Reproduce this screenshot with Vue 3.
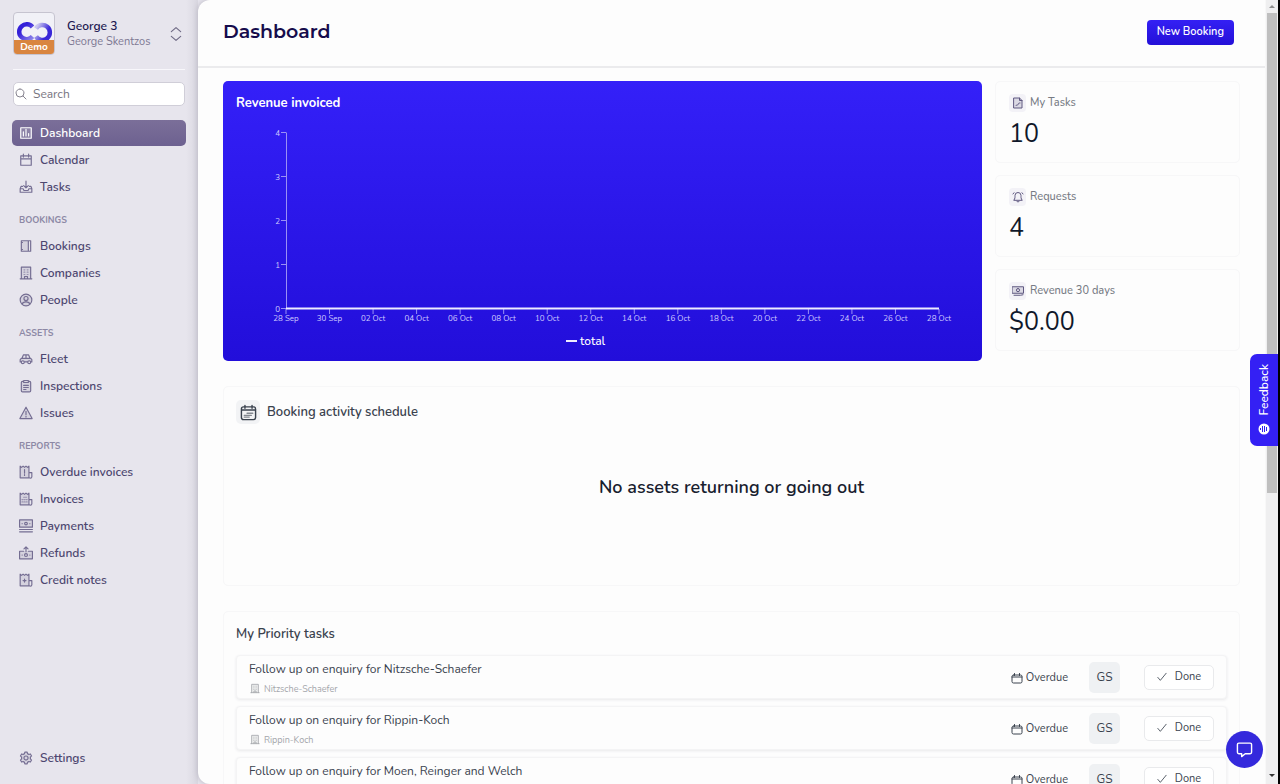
<script setup>
import { h, ref } from 'vue'

const shapes = {
  dashboard: { tint: 'M3 3h18v18H3z', line: 'M3 4v17h18V3H3M7.5 10v7M12 5.500v11.500M16.500 13v4', soft: '' },
  calendar: { line: 'M3 5h18v16H3zM3 10h18M7.500 2v5M16.500 2v5' },
  inbox: { line: 'M12 2v11M8 9.500l4 4 4-4M6 11H3.500L2 15v6h20v-6l-1.500-4H18M2 15h5l1.500 3h7l1.500-3h5' },
  book: { tint: 'M4 3h13v18H4z', line: 'M4 3h16v18H4zM16 3v18M4 6h2M4 18h2' },
  building: { tint: 'M4 2h16v20H4z', line: 'M2 22h20M4 22V2h16v20M9.500 22v-4h5v4', soft: 'M8.500 6.500h1.500M14 6.500h1.500M8.500 10.500h1.500M14 10.500h1.500M8.500 14.500h1.500M14 14.500h1.500' },
  person: { tint: 'M12 2a10 10 0 1 0 0 20a10 10 0 0 0 0-20', line: 'M12 2a10 10 0 1 0 0 20a10 10 0 0 0 0-20M12 6a3.500 3.500 0 1 0 0 7a3.500 3.500 0 0 0 0-7M5.500 19c1-5 12-5 13 0' },
  car: { tint: 'M2 11h20v6H2z', line: 'M5 11l2.500-6h9L19 11M12 5v6M4 11h16l2 2v4h-2M15 17H9M4 17H2v-4l2-2M6.500 15a2.500 2.500 0 1 0 0 5a2.500 2.500 0 0 0 0-5M17.500 15a2.500 2.500 0 1 0 0 5a2.500 2.500 0 0 0 0-5' },
  clipboard: { tint: 'M4 4h16v18H4z', line: 'M8 4H6a2 2 0 0 0-2 2v14a2 2 0 0 0 2 2h12a2 2 0 0 0 2-2V6a2 2 0 0 0-2-2h-2M8 2.500h8V6H8zM8 11h8M8 14.500h8M8 18h4' },
  warning: { tint: 'M12 2L2 21h20z', line: 'M12 2L1.500 21.500h21zM12 9v6M12 17.500v1.500' },
  billAlert: { tint: 'M2 3h14v18H2z', line: 'M2 22V2l2.500 2L7 2l2.500 2L12 2l2.500 2L17 2v20zM17 13h5v7a2 2 0 0 1-5 0M9.500 8v6M9.500 16.500v1.500' },
  bill: { tint: 'M2 3h14v18H2z', line: 'M2 22V2l2.500 2L7 2l2.500 2L12 2l2.500 2L17 2v20zM17 13h5v7a2 2 0 0 1-5 0', soft: 'M8 9h5M5 13h2M9 13h1.500M12.500 13H14M5 17h2M9 17h1.500M12.500 17H14' },
  billPlus: { tint: 'M2 3h14v18H2z', line: 'M2 22V2l2.500 2L7 2l2.500 2L12 2l2.500 2L17 2v20zM17 13h5v7a2 2 0 0 1-5 0M9.500 10.500v5M7 13h5' },
  cash: { tint: 'M1 2h22v12H1z', line: 'M1 1.500h22v12.500H1zM1 18h22M1 22h22M12 5.500a2.300 2.300 0 1 0 0 4.600a2.300 2.300 0 0 0 0-4.600', soft: 'M5 8h1M18 8h1' },
  refund: { tint: 'M1 9h22v13H1z', line: 'M8 9H1v13h22V9h-7M12 10V2M8.500 5L12 1.500L15.500 5M12 13a2.500 2.500 0 1 0 0 5a2.500 2.500 0 0 0 0-5', soft: 'M5 15.500h1M18 15.500h1' },
  gear: { tint: 'M12 4a8 8 0 1 0 0 16a8 8 0 0 0 0-16', line: 'M9.500 4.500L10 2h4l.5 2.500 2.500 1.500 2.500-1 2 3.500-2 2v3l2 2-2 3.500-2.500-1-2.500 1.500L14 22h-4l-.5-2.500L7 18l-2.500 1-2-3.500 2-2v-3l-2-2 2-3.500 2.500 1zM12 8.500a3.500 3.500 0 1 0 0 7a3.500 3.500 0 0 0 0-7' },
  search: { line: 'M10 2a8 8 0 1 0 0 16a8 8 0 0 0 0-16M16 16l6 6' },
  updown: { line: 'M4 8l8-7 8 7M4 16l8 7 8-7' },
  doc: { tint: 'M4 2h11l5 5v15H4z', line: 'M4 2h11l5 5v15H4zM15 2v5h5M8 17c1-3 3 1 4-2s2-3 4-3' },
  bell: { line: 'M4 18c2.500-3 2-6 2-9a6 6 0 0 1 12 0c0 3-.5 6 2 9zM9.500 20.500c1 2 4 2 5 0M2 6l2-2.500M22 6l-2-2.500' },
  note: { tint: 'M1 4h22v13H1z', line: 'M1 3.500h22v13H1zM4 20.500h13l5-1M12 7a3.200 3.200 0 1 0 0 6.400A3.200 3.200 0 0 0 12 7' },
  schedule: { line: 'M5 4h14a3 3 0 0 1 3 3v12a3 3 0 0 1-3 3H5a3 3 0 0 1-3-3V7a3 3 0 0 1 3-3M2 8.500h20M7 2v4M17 2v4', soft: 'M10 13h8M6 16h10M6 18.500h7' },
  due: { line: 'M5 6h14a3 3 0 0 1 3 3v10a3 3 0 0 1-3 3H5a3 3 0 0 1-3-3V9a3 3 0 0 1 3-3M2 10h20M7 3v4M17 3v4' },
  check: { line: 'M2 13l6 7L22 3' },
  chat: { line: 'M4 3h16a2 2 0 0 1 2 2v11a2 2 0 0 1-2 2h-7l-5 4v-4H4a2 2 0 0 1-2-2V5a2 2 0 0 1 2-2' }
}

const Icon = (props) => {
  const s = shapes[props.name]
  return h('svg', { viewBox: '0 0 24 24', fill: 'none', stroke: 'currentColor', 'stroke-width': 2, 'stroke-linejoin': 'round', 'stroke-linecap': 'round', 'aria-hidden': 'true' }, [
    s.tint && h('path', { d: s.tint, fill: 'currentColor', stroke: 'none', opacity: 0.16 }),
    h('path', { d: s.line }),
    s.soft && h('path', { d: s.soft, opacity: 0.6 })
  ])
}
Icon.props = ['name']

const query = ref('')
const groups = [
  { title: '', items: [['Dashboard', 'dashboard'], ['Calendar', 'calendar'], ['Tasks', 'inbox']] },
  { title: 'BOOKINGS', items: [['Bookings', 'book'], ['Companies', 'building'], ['People', 'person']] },
  { title: 'ASSETS', items: [['Fleet', 'car'], ['Inspections', 'clipboard'], ['Issues', 'warning']] },
  { title: 'REPORTS', items: [['Overdue invoices', 'billAlert'], ['Invoices', 'bill'], ['Payments', 'cash'], ['Refunds', 'refund'], ['Credit notes', 'billPlus']] }
]
const stats = [
  { label: 'My Tasks', value: '10', icon: 'doc' },
  { label: 'Requests', value: '4', icon: 'bell' },
  { label: 'Revenue 30 days', value: '$0.00', icon: 'note' }
]
const tasks = ['Nitzsche-Schaefer', 'Rippin-Koch', 'Moen, Reinger and Welch']
const dates = ['28 Sep', '30 Sep', '02 Oct', '04 Oct', '06 Oct', '08 Oct', '10 Oct', '12 Oct', '14 Oct', '16 Oct', '18 Oct', '20 Oct', '22 Oct', '24 Oct', '26 Oct', '28 Oct']
const tickX = (i) => 63 + (i * 653) / 15
const tickY = (n) => 228 - n * 44
</script>

<template>
  <div class="app">
    <aside class="sidebar">
      <button class="account" type="button">
        <span class="logo">
          <svg class="rings" viewBox="0 0 40 26" aria-hidden="true">
            <defs>
              <linearGradient id="ringLeft" x1="0" y1="0" x2="1" y2="1">
                <stop offset="0.3" stop-color="#3420d8" /><stop offset="1" stop-color="#8f86ea" />
              </linearGradient>
              <linearGradient id="ringRight" x1="0" y1="0" x2="1" y2="0.6">
                <stop offset="0.1" stop-color="#c9c6f0" /><stop offset="0.8" stop-color="#3a28d8" />
              </linearGradient>
            </defs>
            <path d="M18.500 9A7.500 7.500 0 1 0 18.500 18.500" fill="none" stroke="url(#ringLeft)" stroke-width="4.500" />
            <path d="M22 10.500A7.500 7.500 0 1 1 22 18.500" fill="none" stroke="url(#ringRight)" stroke-width="4.500" />
          </svg>
          <span class="demo">Demo</span>
        </span>
        <span class="who"><strong>George 3</strong><span>George Skentzos</span></span>
        <Icon name="updown" class="updown" />
      </button>
      <label class="search">
        <Icon name="search" class="glass" />
        <input v-model="query" type="search" placeholder="Search" aria-label="Search" />
      </label>
      <nav class="nav">
        <section v-for="g in groups" :key="g.title">
          <h2 v-if="g.title">{{ g.title }}</h2>
          <a v-for="[label, icon] in g.items" :key="label" href="#" :class="{ active: label === 'Dashboard' }">
            <Icon :name="icon" class="nav-icon" />{{ label }}
          </a>
        </section>
        <a href="#" class="settings"><Icon name="gear" class="nav-icon" />Settings</a>
      </nav>
    </aside>

    <main class="main">
      <header class="top">
        <h1>Dashboard</h1>
        <button class="primary" type="button">New Booking</button>
      </header>
      <div class="content">
        <div class="overview">
          <section class="revenue">
            <h2>Revenue invoiced</h2>
            <svg class="chart" viewBox="0 0 759 280" role="img" aria-label="Revenue invoiced, total">
              <g class="axis">
                <path d="M63.500 51.500V228" />
                <g v-for="n in [0, 1, 2, 3, 4]" :key="n">
                  <path :d="`M58 ${tickY(n) - 0.5}h5`" />
                  <text x="57" :y="tickY(n) + 3" text-anchor="end">{{ n }}</text>
                </g>
                <g v-for="(d, i) in dates" :key="d">
                  <path :d="`M${tickX(i)} 228v5`" />
                  <text :x="tickX(i)" y="240" text-anchor="middle">{{ d }}</text>
                </g>
              </g>
              <path class="series" d="M63 227.500H716" />
              <path class="series" d="M343 260h11" />
              <text class="legend" x="357" y="264">total</text>
            </svg>
          </section>
          <div class="stats">
            <section v-for="s in stats" :key="s.label" class="card stat">
              <h3><span class="chip"><Icon :name="s.icon" class="chip-icon" /></span>{{ s.label }}</h3>
              <p>{{ s.value }}</p>
            </section>
          </div>
        </div>

        <section class="card schedule">
          <h2><span class="badge"><Icon name="schedule" class="badge-icon" /></span>Booking activity schedule</h2>
          <p>No assets returning or going out</p>
        </section>

        <section class="card priority">
          <h2>My Priority tasks</h2>
          <ul>
            <li v-for="t in tasks" :key="t">
              <div class="task">
                <a href="#">Follow up on enquiry for {{ t }}</a>
                <span class="company"><Icon name="building" class="company-icon" />{{ t }}</span>
              </div>
              <span class="due"><Icon name="due" class="due-icon" />Overdue</span>
              <span class="avatar">GS</span>
              <button class="done" type="button"><Icon name="check" class="check-icon" />Done</button>
            </li>
          </ul>
        </section>
      </div>
    </main>

    <div class="scroll" aria-hidden="true">
      <span class="arrow up"></span><span class="thumb"></span><span class="arrow down"></span>
    </div>
    <button class="feedback" type="button">
      <svg viewBox="0 0 12 12" aria-hidden="true"><circle cx="6" cy="6" r="5.500" fill="#fff" /><path d="M2.500 5v2M4.500 3v6M6.500 3v6M8.500 4v4" stroke="#3420f0" /></svg>
      <span>Feedback</span>
    </button>
    <button class="chat" type="button" aria-label="Open chat"><Icon name="chat" class="chat-icon" /></button>
  </div>
</template>

<style>
body { background: #e6e4ec; }
</style>

<style scoped>
* { box-sizing: border-box; }
h1, h2, h3, p, ul { margin: 0; padding: 0; }
button, input { font: inherit; color: inherit; }
button { cursor: pointer; }
a { color: inherit; text-decoration: none; }
.app { position: relative; display: flex; height: 100vh; overflow: hidden; background: #e7e5ed; font: 12px/16px Nunito, Lato, "Open Sans", sans-serif; color: #3a424e; }

.sidebar { display: flex; flex-direction: column; flex: 0 0 198px; padding: 12px 13px; background: linear-gradient(90deg, #e7e5ed 94%, #d9d7e0); color: #4d4770; }
.account { display: flex; align-items: center; gap: 12px; padding: 0 2px 14px 0; border: 0; border-bottom: 1px solid #f8f7fb; background: none; text-align: left; }
.logo { display: flex; flex-direction: column; justify-content: flex-end; width: 42px; height: 43px; border: 1px solid #c6c4d0; border-radius: 4px; background: #f1f1f7; overflow: hidden; }
.rings { width: 40px; height: 26px; margin-bottom: -4px; }
.demo { height: 14px; background: #d9853f; color: #fff; font-size: 10px; line-height: 14px; text-align: center; font-weight: 700; z-index: 1; }
.who { display: flex; flex-direction: column; flex: 1; padding-top: 1px; white-space: nowrap; font-size: 11px; color: #7d7893; }
.who strong { font-size: 12px; font-weight: 600; color: #211750; }
.updown { width: 14px; height: 16px; color: #6f6a85; }
.search { display: flex; align-items: center; gap: 6px; height: 24px; margin-top: 12px; padding-left: 1px; border: 1px solid #d0ced8; border-radius: 5px; background: #fff; }
.glass { width: 12px; height: 12px; flex: none; color: #86838f; }
.search input { width: 100%; min-width: 0; padding: 0; border: 0; outline: 0; background: none; font-size: 12px; }
.search input::placeholder { color: #77757f; opacity: 1; }
.nav { display: flex; flex-direction: column; flex: 1; margin: 14px -1px 0; font-size: 12px; font-weight: 600; }
.nav a { display: flex; align-items: center; gap: 7px; height: 26px; margin-bottom: 1px; padding-left: 7px; border-radius: 5px; }
.nav a.active { background: linear-gradient(#7b6f99, #6d6190); color: #fff; }
.nav h2 { height: 32px; padding: 11px 7px 0; font-size: 9px; line-height: 16px; font-weight: 700; color: #8c88a5; }
.nav-icon { width: 14px; height: 14px; flex: none; color: #746d92; }
.active .nav-icon { color: #fff; }
.nav .settings { margin-top: auto; margin-bottom: 1px; }

.main { flex: 1; min-width: 0; overflow: hidden; border-radius: 12px 0 0 12px; background: #fdfdfd; box-shadow: -1px 0 5px #bfbdc8; }
.top { display: flex; align-items: center; justify-content: space-between; height: 68px; padding: 0 31px 2px 25px; border-bottom: 2px solid #ebebed; }
.top h1 { font: 600 19px/28px Montserrat, Inter, sans-serif; color: #160c4c; }
.primary { height: 25px; padding: 0 10px; border: 0; border-radius: 4px; background: linear-gradient(#3420f4, #2410d8); color: #fff; font-size: 11px; font-weight: 600; }
.content { display: flex; flex-direction: column; gap: 25px; padding: 13px 25px; }
.overview { display: grid; grid-template-columns: minmax(0, 1fr) 245px; gap: 13px; }
.revenue { display: grid; border-radius: 5px; background: linear-gradient(#3420f8, #220eda); color: #fff; }
.revenue > * { grid-area: 1 / 1; }
.revenue h2 { padding: 14px 13px; font-size: 13px; line-height: 16px; font-weight: 700; }
.chart { width: 100%; }
.axis path { stroke: #9a90f4; stroke-width: 1; }
.axis text { fill: #cfcaff; font-size: 8px; }
.series { stroke: #eeecff; stroke-width: 2; }
.legend { fill: #fff; font-size: 12px; font-weight: 500; }
.card { border: 1px solid #f7f7f8; border-radius: 5px; background: #fdfdfd; }
.stats { display: grid; grid-template-rows: repeat(3, 82px); align-content: start; gap: 12px; }
.stat { padding: 12px 13px; }
.stat h3 { display: flex; align-items: center; gap: 4px; font-size: 11px; line-height: 18px; font-weight: 500; color: #777b84; }
.chip { display: grid; place-items: center; width: 17px; height: 18px; border-radius: 4px; background: #f3f2f7; color: #5f5880; }
.chip-icon { width: 12px; height: 12px; }
.stat p { margin-top: 6px; font-size: 25px; line-height: 32px; color: #10182a; }
.schedule { min-height: 200px; padding: 13px 12px; }
.schedule h2 { display: flex; align-items: center; gap: 7px; font-size: 13px; line-height: 24px; font-weight: 600; }
.badge { display: grid; place-items: center; width: 24px; height: 24px; border-radius: 5px; background: #f2f3f5; }
.badge-icon { width: 17px; height: 17px; }
.schedule p { margin-top: 50px; font-size: 18px; line-height: 26px; font-weight: 600; text-align: center; color: #18202e; }
.priority { padding: 13px 12px; }
.priority h2 { font-size: 13px; line-height: 18px; font-weight: 600; }
.priority ul { display: grid; gap: 7px; margin-top: 12px; list-style: none; }
.priority li { display: flex; align-items: center; height: 44px; padding: 0 12px; border: 1px solid #f4f4f5; border-radius: 4px; background: #fdfdfd; box-shadow: 0 1px 3px #e9e9eb; }
.task { flex: 1; display: flex; flex-direction: column; gap: 4px; padding-top: 3px; }
.company { display: flex; align-items: center; gap: 4px; padding-left: 1px; font-size: 9px; color: #a4a6ab; }
.company-icon { width: 10px; height: 11px; }
.due { display: flex; align-items: center; gap: 3px; padding-top: 1px; font-size: 11px; }
.due-icon { width: 12px; height: 12px; }
.avatar { display: grid; place-items: center; width: 31px; height: 31px; margin: 0 24px 0 21px; border-radius: 5px; background: #eff1f3; }
.done { display: flex; align-items: center; justify-content: center; gap: 8px; width: 70px; height: 25px; padding: 0; border: 1px solid #e9eaec; border-radius: 5px; background: #fff; font-size: 11px; }
.check-icon { width: 10px; height: 10px; }

.scroll { display: flex; flex-direction: column; align-items: center; flex: 0 0 15px; background: #efeff0; border-left: 1px solid #f8f8f8; border-right: 2px solid #000; }
.arrow { width: 0; height: 0; border: 3px solid transparent; }
.up { margin: 2px 0 5px; border-bottom-color: #8d8d8d; }
.down { margin: auto 0 4px; border-top-color: #333; }
.thumb { width: 10px; height: 480px; background: #bfbfbf; }
.feedback { position: absolute; right: 2px; top: 354px; display: flex; flex-direction: column-reverse; align-items: center; gap: 8px; width: 28px; padding: 10px 0 11px; border: 0; border-radius: 7px 0 0 7px; background: #3420f4; color: #fff; font-size: 12px; font-weight: 500; }
.feedback span { writing-mode: vertical-rl; transform: rotate(180deg); }
.feedback svg { width: 12px; height: 12px; }
.chat { position: absolute; right: 17px; bottom: 16px; display: grid; place-items: center; width: 37px; height: 37px; padding: 0; border: 0; border-radius: 50%; background: #3429dc; color: #fff; }
.chat-icon { width: 17px; height: 17px; }
</style>
